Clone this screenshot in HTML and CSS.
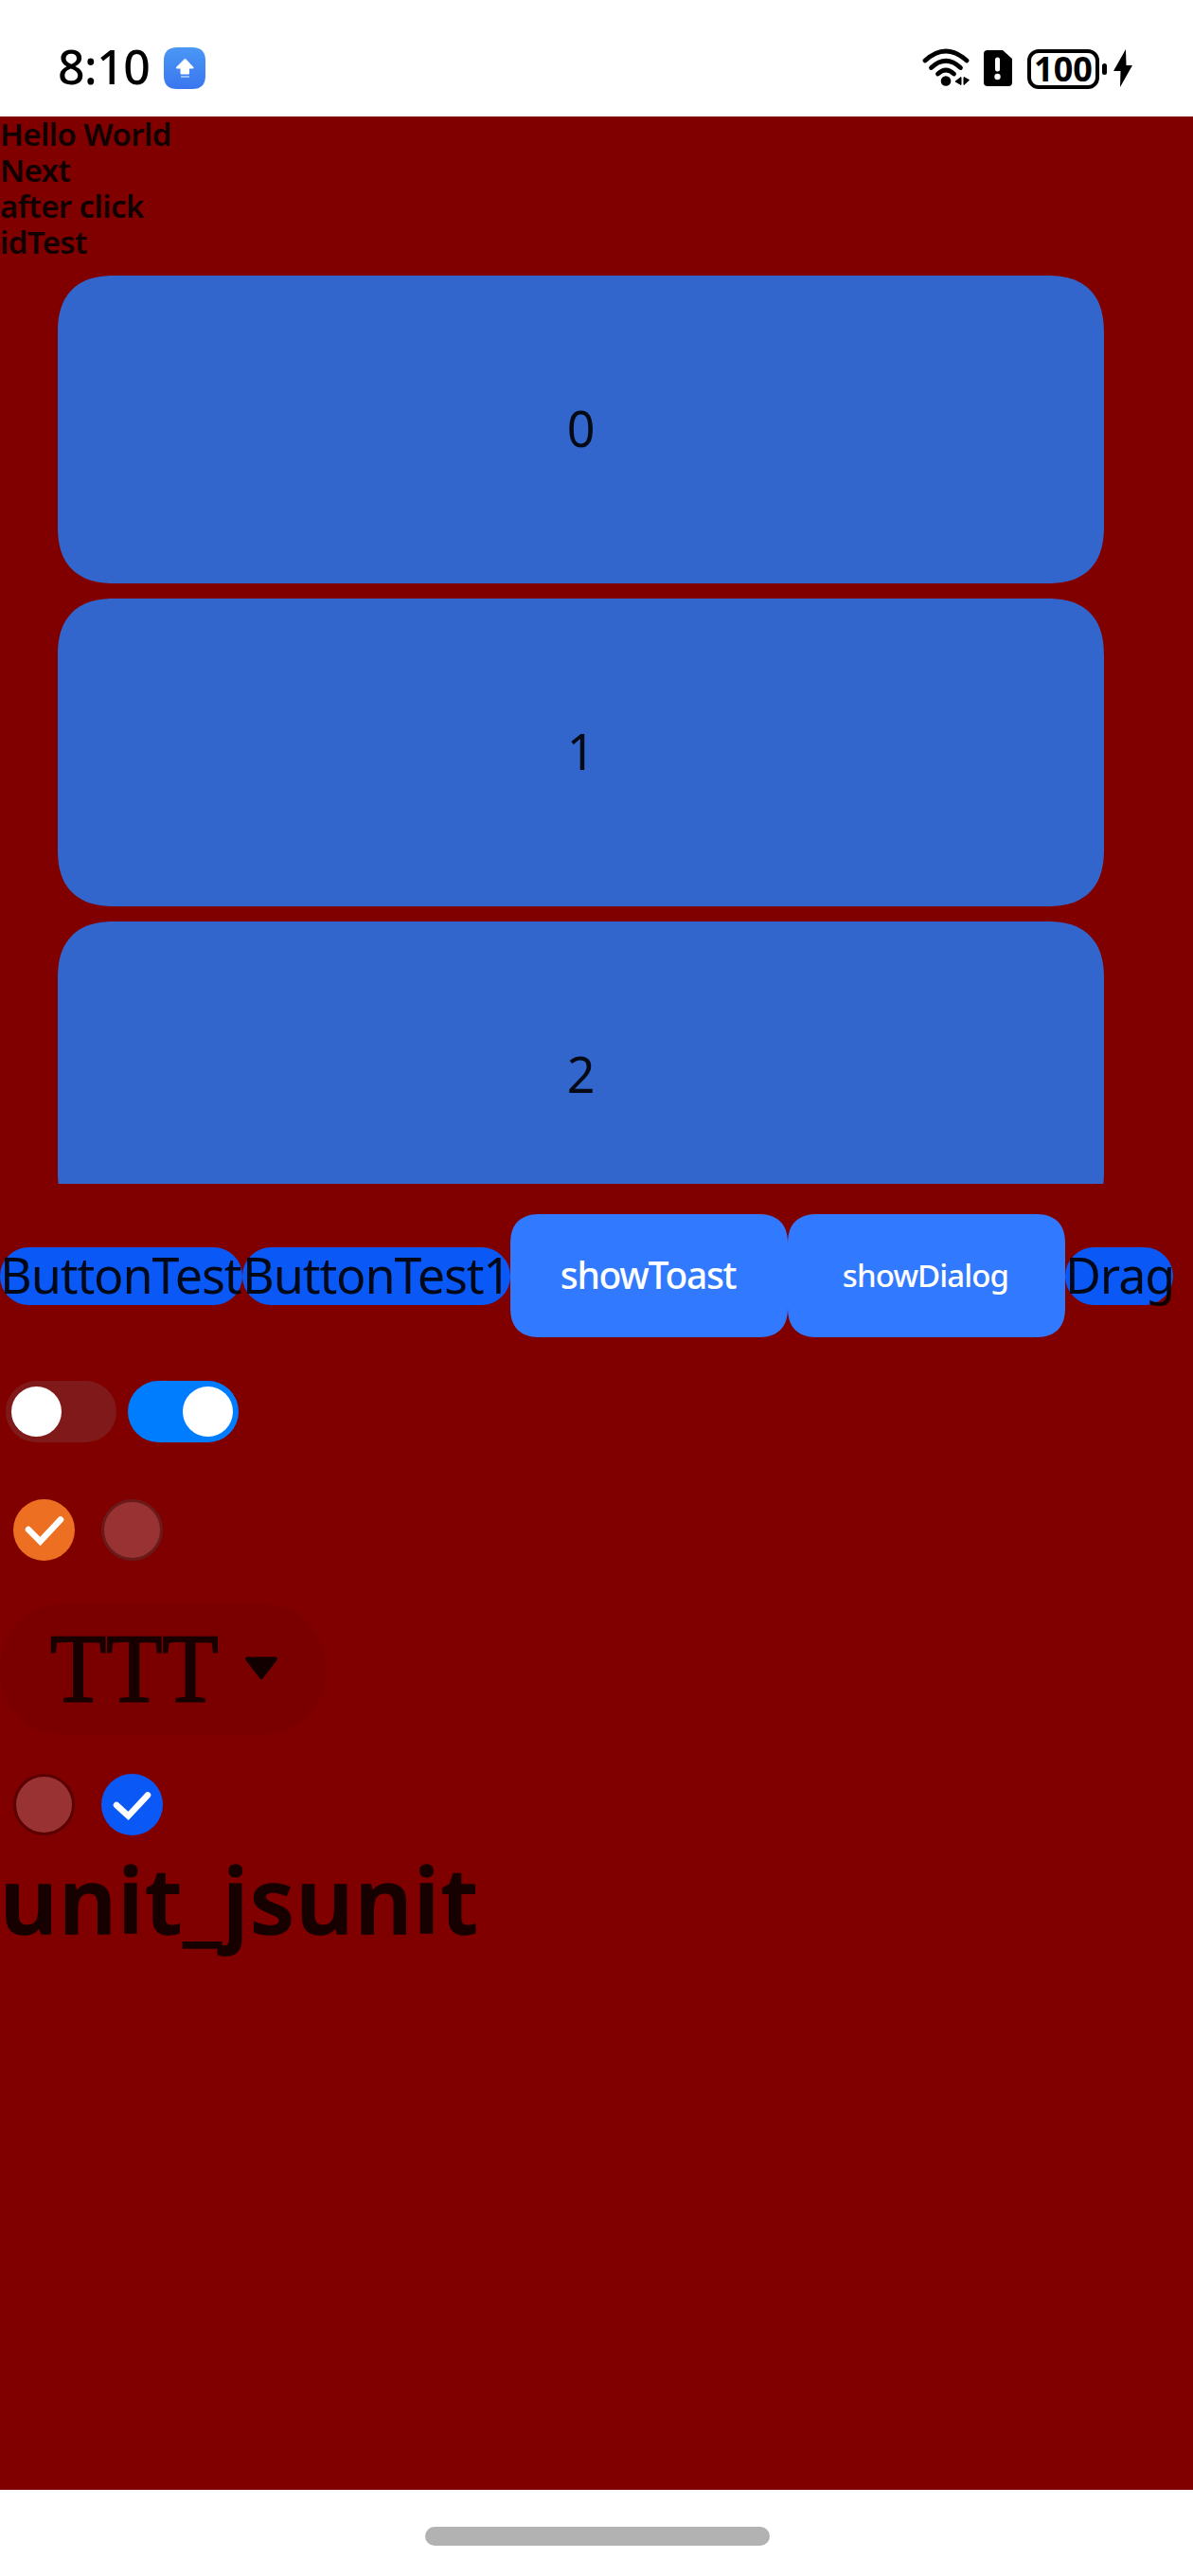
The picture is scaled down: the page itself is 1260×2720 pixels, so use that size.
FILE: index.html
```html
<!DOCTYPE html>
<html lang="en">
<head>
<meta charset="utf-8">
<title>Component test</title>
<link rel="stylesheet" href="styles.css">
</head>
<body>
<header class="status">
  <div class="status-left">
    <span class="clock">8:10</span>
    <svg class="badge" width="44" height="44" viewBox="0 0 44 44">
      <defs><linearGradient id="sky" x1="0" y1="0" x2="0" y2="1"><stop offset="0" stop-color="#4a97f5"/><stop offset="1" stop-color="#3a76ef"/></linearGradient></defs>
      <path fill="url(#sky)" d="M14 0H30Q44 0 44 14V30Q44 44 30 44H14Q0 44 0 30V14Q0 0 14 0Z"/>
      <path fill="#fff" stroke="#fff" stroke-width="2" stroke-linejoin="round" d="M22.500 13L30.500 21.500H26V27.500H18.500V21.500H14Z"/>
      <path stroke="#b9d2fb" stroke-width="1.500" d="M18 31H27"/>
    </svg>
  </div>
  <div class="status-right">
    <svg class="wifi" width="52" height="42" viewBox="0 0 52 42">
      <g fill="none" stroke="#000" stroke-width="4.800" stroke-linecap="round">
        <path d="M3 13Q25 -7 47 13"/><path d="M9.500 20.500Q25 6 40.500 20.500"/><path d="M16.500 27Q25 19 33.500 27"/>
      </g>
      <circle cx="25" cy="34.500" r="5.300"/>
      <path stroke="#000" stroke-linejoin="round" d="M41 30.500V38.500L35 35ZM44 30.500V38.500L49.500 33.500Z"/>
    </svg>
    <svg class="sim" width="30" height="38" viewBox="0 0 30 38">
      <path d="M4 0H20L30 9V34Q30 38 26 38H4Q0 38 0 34V4Q0 0 4 0Z"/>
      <path stroke="#fff" stroke-width="5" stroke-linecap="round" d="M14.500 10V20"/><circle cx="14.500" cy="28" r="3.200" fill="#fff"/>
    </svg>
    <span class="battery">100</span>
    <span class="battery-tip"></span>
    <svg class="bolt" width="20" height="40" viewBox="0 0 20 40"><path d="M13 0L0 23H7.500L7 40L20 17H13.500Z"/></svg>
  </div>
</header>
<main class="page">
  <div class="labels">
    <p>Hello World</p><p>Next</p><p>after click</p><p>idTest</p>
  </div>
  <div class="list">
    <div class="card">0</div><div class="card">1</div><div class="card">2</div>
  </div>
  <div class="buttons">
    <button class="pill pill-a"><span>ButtonTest</span></button>
    <button class="pill pill-b"><span>ButtonTest1</span></button>
    <button class="action toast"><span>showToast</span></button>
    <button class="action dialog"><span>showDialog</span></button>
    <button class="pill pill-c"><span>Drag</span></button>
  </div>
  <div class="toggles">
    <span class="toggle"><i></i></span><span class="toggle on"><i></i></span>
  </div>
  <div class="checks">
    <span class="check orange"><svg width="65" height="65" viewBox="0 0 65 65"><path d="M16 32L28.500 44.500L50 21.500"/></svg></span>
    <span class="check empty"></span>
  </div>
  <div class="select"><span>TTT</span>
    <svg width="36" height="25" viewBox="0 0 36 25"><path stroke="#120000" fill="#120000" stroke-width="4" stroke-linejoin="round" d="M3 2.500H33L18 22Z"/></svg>
  </div>
  <div class="checks radios">
    <span class="check empty dark"></span>
    <span class="check blue"><svg width="65" height="65" viewBox="0 0 65 65"><path d="M16 33L28.500 44.500L49 22.500"/></svg></span>
  </div>
  <h1 class="title">unit_jsunit</h1>
</main>
<footer class="nav"><span class="handle"></span></footer>
</body>
</html>
```
FILE: styles.css
```css
* { box-sizing: border-box; margin: 0; padding: 0; }
body {
  width: 1260px; height: 2720px; display: flex; flex-direction: column;
  background: #fff; font-family: "Noto Sans", sans-serif; color: #000; overflow: hidden;
}
svg { display: block; flex: none; }
span { white-space: nowrap; }

.status { height: 123px; display: flex; justify-content: space-between; padding: 50px 64px 0 61px; }
.status-left, .status-right { display: flex; align-items: flex-start; }
.clock { width: 112px; font-size: 50px; line-height: 41px; font-weight: 500; letter-spacing: -0.5px; }
.wifi { margin: 1px 13px 0 0; }
.sim { margin: 3px 16px 0 0; }
.battery {
  width: 76px; height: 42px; margin-top: 2px; border: 4px solid #000; border-radius: 12px;
  display: flex; align-items: center; justify-content: center;
  font-size: 36px; line-height: 34px; font-weight: 700;
}
.battery-tip { width: 5px; height: 12px; margin: 17px 7px 0 3px; border-radius: 3px; background: #000; }
.bolt { margin-top: 2px; }

.page { height: 2506px; background: #800000; color: rgba(0, 0, 0, .9); }
.labels { height: 168px; font-size: 33px; line-height: 38px; font-weight: 600; letter-spacing: -0.6px; }
.list { width: 1105px; height: 959px; margin-left: 61px; overflow: hidden; display: flex; flex-direction: column; gap: 16px; }
.card {
  flex: none; height: 325px; padding-bottom: 4px; border-radius: 51px; background: #3366cc;
  display: flex; align-items: center; justify-content: center; font-size: 52px;
}
.buttons { height: 130px; margin-top: 32px; display: flex; align-items: center; }
.buttons button { border: 0; font: inherit; display: flex; align-items: center; justify-content: center; flex: none; }
.buttons .pill {
  height: 61px; padding-bottom: 3px; border-radius: 31px; background: #0a59f7; color: rgba(0, 0, 0, .9);
  font-size: 52px; line-height: 58px; letter-spacing: -1.1px; justify-content: flex-start;
}
.pill-a { width: 256px; } .pill-b { width: 283px; } .pill-c { width: 114px; }
.buttons .action { width: 293px; height: 130px; padding: 0 2px 3px 0; border-radius: 28px; background: #317aff; color: #fff; }
.buttons .toast { font-size: 39px; font-weight: 500; letter-spacing: -1.3px; }
.buttons .dialog { padding-bottom: 2px; font-size: 33px; font-weight: 500; letter-spacing: -0.9px; }
@supports (corner-shape: superellipse(1.3)) {
  .card { border-radius: 61px; corner-shape: superellipse(1.3); }
  .buttons .action { border-radius: 32px; corner-shape: superellipse(1.3); }
}

.toggles { display: flex; gap: 12px; margin: 46px 0 0 6px; }
.toggle { width: 117px; height: 65px; border-radius: 33px; background: #801a1a; display: flex; align-items: center; padding: 0 6px; }
.toggle i { width: 53px; height: 53px; border-radius: 50%; background: #fff; }
.toggle.on { background: #007dff; justify-content: flex-end; }

.checks { display: flex; gap: 28px; margin: 60px 0 0 14px; }
.check { width: 65px; height: 65px; border-radius: 50%; }
.check path { fill: none; stroke: #fff; stroke-width: 6.500; stroke-linecap: round; }
.orange { background: #ed6f21; }
.blue { background: #0a59f7; }
.empty { background: #993333; border: 3px solid #6b1a1a; }
.dark { border-color: #5a0000; }

.select { width: 344px; height: 137px; margin-top: 46px; padding: 0 0 2px 53px; border-radius: 65px; background: #7a0000; display: flex; align-items: center; }
.select span {
  width: 205px; font: 104px/120px "Liberation Serif", serif; -webkit-text-stroke: 2px #180000; color: #180000;
  transform: scaleX(.932); transform-origin: left;
}
.radios { margin-top: 42px; }
.title { font-size: 95px; line-height: 115px; font-weight: 600; letter-spacing: 1.7px; -webkit-text-stroke: 1.5px #160000; color: #160000; margin-top: 10px; }

.nav { height: 91px; display: flex; justify-content: center; padding: 39px 0 0 2px; }
.handle { width: 364px; height: 20px; border-radius: 10px; background: #b2b2b2; }
```
